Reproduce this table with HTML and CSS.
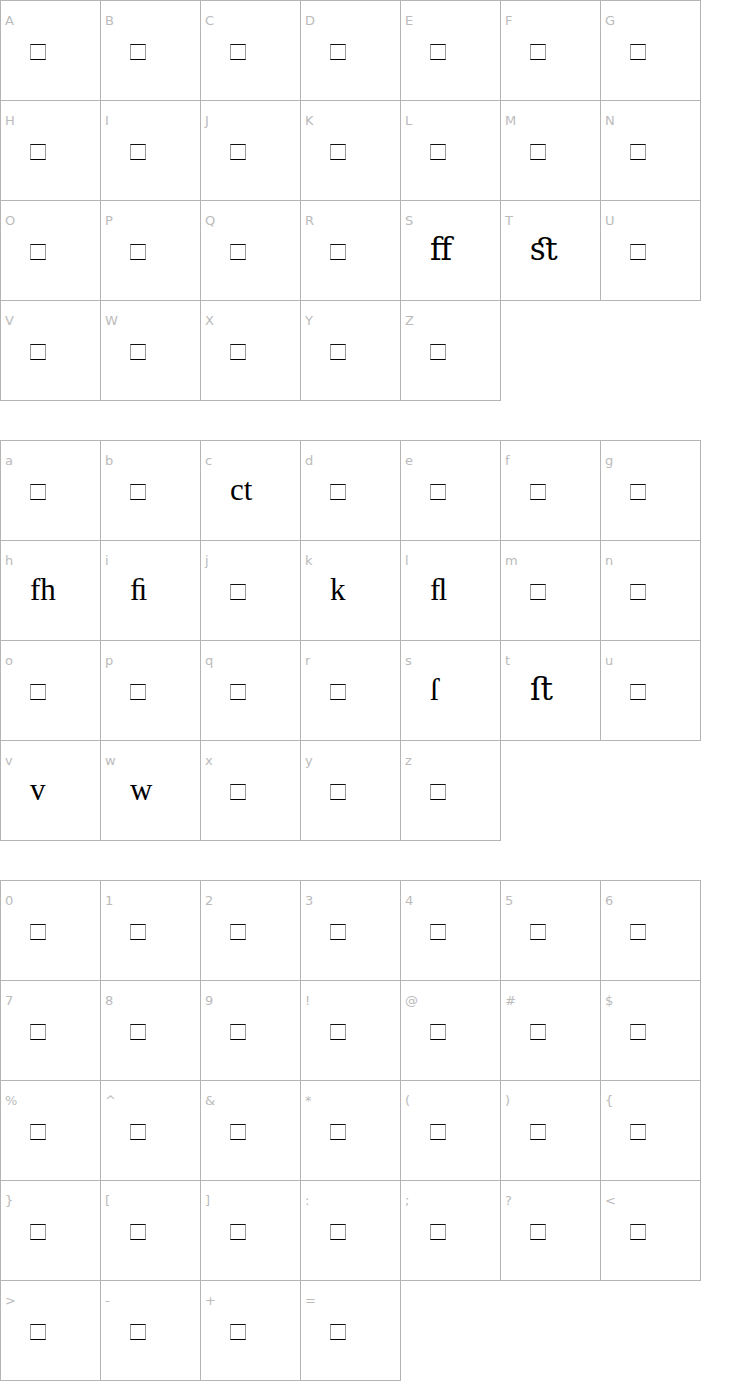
FILE: index.html
```html
<!DOCTYPE html>
<html>
<head>
<meta charset="utf-8">
<link rel="stylesheet" href="styles.css">
</head>
<body>
<div class="set">
  <div class="cell"><div class="lbl">A</div><div class="glyph"><span class="tofu"></span></div></div>
  <div class="cell"><div class="lbl">B</div><div class="glyph"><span class="tofu"></span></div></div>
  <div class="cell"><div class="lbl">C</div><div class="glyph"><span class="tofu"></span></div></div>
  <div class="cell"><div class="lbl">D</div><div class="glyph"><span class="tofu"></span></div></div>
  <div class="cell"><div class="lbl">E</div><div class="glyph"><span class="tofu"></span></div></div>
  <div class="cell"><div class="lbl">F</div><div class="glyph"><span class="tofu"></span></div></div>
  <div class="cell"><div class="lbl">G</div><div class="glyph"><span class="tofu"></span></div></div>
  <div class="cell"><div class="lbl">H</div><div class="glyph"><span class="tofu"></span></div></div>
  <div class="cell"><div class="lbl">I</div><div class="glyph"><span class="tofu"></span></div></div>
  <div class="cell"><div class="lbl">J</div><div class="glyph"><span class="tofu"></span></div></div>
  <div class="cell"><div class="lbl">K</div><div class="glyph"><span class="tofu"></span></div></div>
  <div class="cell"><div class="lbl">L</div><div class="glyph"><span class="tofu"></span></div></div>
  <div class="cell"><div class="lbl">M</div><div class="glyph"><span class="tofu"></span></div></div>
  <div class="cell"><div class="lbl">N</div><div class="glyph"><span class="tofu"></span></div></div>
  <div class="cell"><div class="lbl">O</div><div class="glyph"><span class="tofu"></span></div></div>
  <div class="cell"><div class="lbl">P</div><div class="glyph"><span class="tofu"></span></div></div>
  <div class="cell"><div class="lbl">Q</div><div class="glyph"><span class="tofu"></span></div></div>
  <div class="cell"><div class="lbl">R</div><div class="glyph"><span class="tofu"></span></div></div>
  <div class="cell"><div class="lbl">S</div><div class="glyph">ﬀ</div></div>
  <div class="cell"><div class="lbl">T</div><div class="glyph">ﬆ</div></div>
  <div class="cell"><div class="lbl">U</div><div class="glyph"><span class="tofu"></span></div></div>
  <div class="cell"><div class="lbl">V</div><div class="glyph"><span class="tofu"></span></div></div>
  <div class="cell"><div class="lbl">W</div><div class="glyph"><span class="tofu"></span></div></div>
  <div class="cell"><div class="lbl">X</div><div class="glyph"><span class="tofu"></span></div></div>
  <div class="cell"><div class="lbl">Y</div><div class="glyph"><span class="tofu"></span></div></div>
  <div class="cell"><div class="lbl">Z</div><div class="glyph"><span class="tofu"></span></div></div>
</div>

<div class="set">
  <div class="cell"><div class="lbl">a</div><div class="glyph"><span class="tofu"></span></div></div>
  <div class="cell"><div class="lbl">b</div><div class="glyph"><span class="tofu"></span></div></div>
  <div class="cell"><div class="lbl">c</div><div class="glyph">ct</div></div>
  <div class="cell"><div class="lbl">d</div><div class="glyph"><span class="tofu"></span></div></div>
  <div class="cell"><div class="lbl">e</div><div class="glyph"><span class="tofu"></span></div></div>
  <div class="cell"><div class="lbl">f</div><div class="glyph"><span class="tofu"></span></div></div>
  <div class="cell"><div class="lbl">g</div><div class="glyph"><span class="tofu"></span></div></div>
  <div class="cell"><div class="lbl">h</div><div class="glyph">fh</div></div>
  <div class="cell"><div class="lbl">i</div><div class="glyph">ﬁ</div></div>
  <div class="cell"><div class="lbl">j</div><div class="glyph"><span class="tofu"></span></div></div>
  <div class="cell"><div class="lbl">k</div><div class="glyph">k</div></div>
  <div class="cell"><div class="lbl">l</div><div class="glyph">ﬂ</div></div>
  <div class="cell"><div class="lbl">m</div><div class="glyph"><span class="tofu"></span></div></div>
  <div class="cell"><div class="lbl">n</div><div class="glyph"><span class="tofu"></span></div></div>
  <div class="cell"><div class="lbl">o</div><div class="glyph"><span class="tofu"></span></div></div>
  <div class="cell"><div class="lbl">p</div><div class="glyph"><span class="tofu"></span></div></div>
  <div class="cell"><div class="lbl">q</div><div class="glyph"><span class="tofu"></span></div></div>
  <div class="cell"><div class="lbl">r</div><div class="glyph"><span class="tofu"></span></div></div>
  <div class="cell"><div class="lbl">s</div><div class="glyph">ſ</div></div>
  <div class="cell"><div class="lbl">t</div><div class="glyph">ﬅ</div></div>
  <div class="cell"><div class="lbl">u</div><div class="glyph"><span class="tofu"></span></div></div>
  <div class="cell"><div class="lbl">v</div><div class="glyph">v</div></div>
  <div class="cell"><div class="lbl">w</div><div class="glyph">w</div></div>
  <div class="cell"><div class="lbl">x</div><div class="glyph"><span class="tofu"></span></div></div>
  <div class="cell"><div class="lbl">y</div><div class="glyph"><span class="tofu"></span></div></div>
  <div class="cell"><div class="lbl">z</div><div class="glyph"><span class="tofu"></span></div></div>
</div>

<div class="set">
  <div class="cell"><div class="lbl">0</div><div class="glyph"><span class="tofu"></span></div></div>
  <div class="cell"><div class="lbl">1</div><div class="glyph"><span class="tofu"></span></div></div>
  <div class="cell"><div class="lbl">2</div><div class="glyph"><span class="tofu"></span></div></div>
  <div class="cell"><div class="lbl">3</div><div class="glyph"><span class="tofu"></span></div></div>
  <div class="cell"><div class="lbl">4</div><div class="glyph"><span class="tofu"></span></div></div>
  <div class="cell"><div class="lbl">5</div><div class="glyph"><span class="tofu"></span></div></div>
  <div class="cell"><div class="lbl">6</div><div class="glyph"><span class="tofu"></span></div></div>
  <div class="cell"><div class="lbl">7</div><div class="glyph"><span class="tofu"></span></div></div>
  <div class="cell"><div class="lbl">8</div><div class="glyph"><span class="tofu"></span></div></div>
  <div class="cell"><div class="lbl">9</div><div class="glyph"><span class="tofu"></span></div></div>
  <div class="cell"><div class="lbl">!</div><div class="glyph"><span class="tofu"></span></div></div>
  <div class="cell"><div class="lbl">@</div><div class="glyph"><span class="tofu"></span></div></div>
  <div class="cell"><div class="lbl">#</div><div class="glyph"><span class="tofu"></span></div></div>
  <div class="cell"><div class="lbl">$</div><div class="glyph"><span class="tofu"></span></div></div>
  <div class="cell"><div class="lbl">%</div><div class="glyph"><span class="tofu"></span></div></div>
  <div class="cell"><div class="lbl">^</div><div class="glyph"><span class="tofu"></span></div></div>
  <div class="cell"><div class="lbl">&amp;</div><div class="glyph"><span class="tofu"></span></div></div>
  <div class="cell"><div class="lbl">*</div><div class="glyph"><span class="tofu"></span></div></div>
  <div class="cell"><div class="lbl">(</div><div class="glyph"><span class="tofu"></span></div></div>
  <div class="cell"><div class="lbl">)</div><div class="glyph"><span class="tofu"></span></div></div>
  <div class="cell"><div class="lbl">{</div><div class="glyph"><span class="tofu"></span></div></div>
  <div class="cell"><div class="lbl">}</div><div class="glyph"><span class="tofu"></span></div></div>
  <div class="cell"><div class="lbl">[</div><div class="glyph"><span class="tofu"></span></div></div>
  <div class="cell"><div class="lbl">]</div><div class="glyph"><span class="tofu"></span></div></div>
  <div class="cell"><div class="lbl">:</div><div class="glyph"><span class="tofu"></span></div></div>
  <div class="cell"><div class="lbl">;</div><div class="glyph"><span class="tofu"></span></div></div>
  <div class="cell"><div class="lbl">?</div><div class="glyph"><span class="tofu"></span></div></div>
  <div class="cell"><div class="lbl">&lt;</div><div class="glyph"><span class="tofu"></span></div></div>
  <div class="cell"><div class="lbl">&gt;</div><div class="glyph"><span class="tofu"></span></div></div>
  <div class="cell"><div class="lbl">-</div><div class="glyph"><span class="tofu"></span></div></div>
  <div class="cell"><div class="lbl">+</div><div class="glyph"><span class="tofu"></span></div></div>
  <div class="cell"><div class="lbl">=</div><div class="glyph"><span class="tofu"></span></div></div>
</div>
</body>
</html>
```

FILE: styles.css
```css
html, body {
  margin: 0;
  padding: 0;
  background: #ffffff;
}

.set {
  display: grid;
  grid-template-columns: repeat(7, 100px);
  width: max-content;
  border-top: 1px solid #b4b4b4;
  border-left: 1px solid #b4b4b4;
  margin-bottom: 39px;
}

.cell {
  box-sizing: border-box;
  height: 100px;
  border-right: 1px solid #b4b4b4;
  border-bottom: 1px solid #b4b4b4;
  overflow: hidden;
}

.lbl {
  font-family: "DejaVu Sans", Verdana, sans-serif;
  font-size: 13px;
  line-height: 13px;
  color: #bbbbbb;
  padding: 13px 0 0 4px;
}

.glyph {
  font-family: "Liberation Serif", "DejaVu Serif", serif;
  font-size: 31px;
  line-height: 32px;
  color: #000000;
  margin-top: 7px;
  padding-left: 29px;
  white-space: nowrap;
}

.tofu {
  display: inline-block;
  width: 14px;
  height: 14px;
  border-top: 1px solid #111111;
  border-bottom: 1px solid #000000;
  border-left: 1px solid #9a9a9a;
  border-right: 1px solid #9a9a9a;
}
```
